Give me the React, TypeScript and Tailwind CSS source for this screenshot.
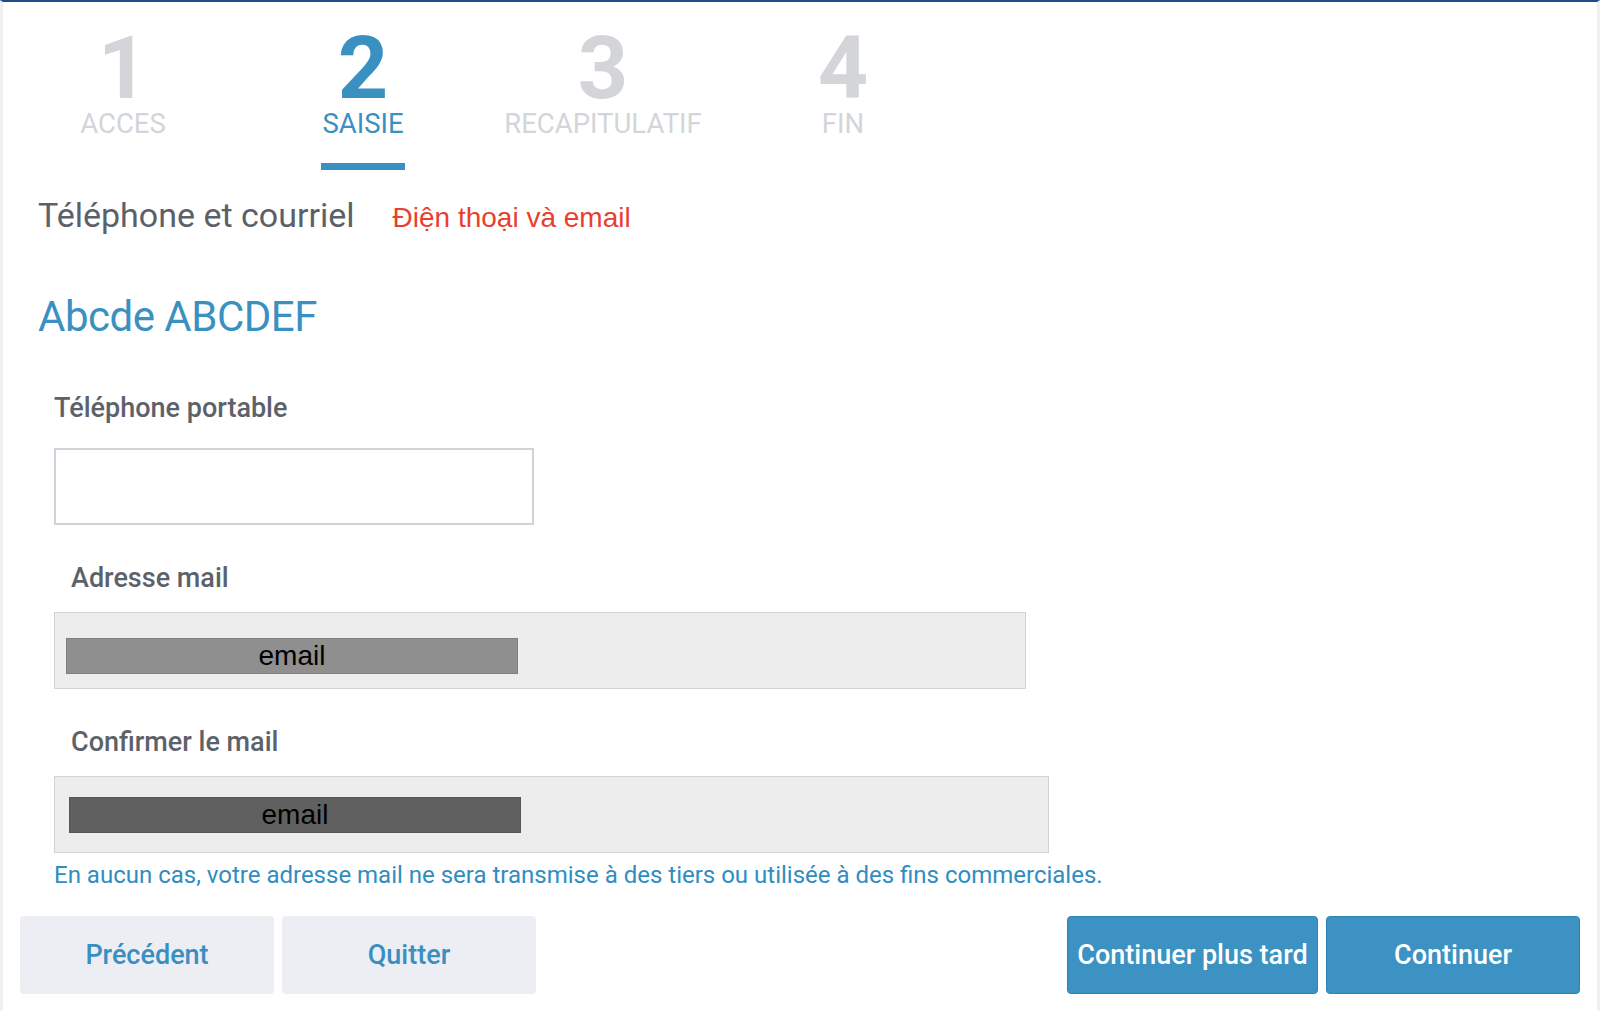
import React from "react";

const steps = [
  { n: "1", label: "ACCES" },
  { n: "2", label: "SAISIE", active: true },
  { n: "3", label: "RECAPITULATIF" },
  { n: "4", label: "FIN" },
];

function Stepper() {
  return (
    <div className="flex pt-[26px]">
      {steps.map((s) => (
        <div key={s.n} className="flex w-[240px] flex-col items-center">
          <span
            className={`text-[88px] font-bold leading-[80px] ${
              s.active ? "text-[#3a91c1]" : "text-[#d3d5d9]"
            }`}
          >
            {s.n}
          </span>
          <span
            className={`mt-[1px] text-[27.5px] leading-[30px] ${
              s.active ? "text-[#3a91c1]" : "text-[#d3d5d9]"
            }`}
          >
            {s.label}
          </span>
          <div
            className={`mt-[24px] h-[7px] w-[84px] ${
              s.active ? "bg-[#3a91c1]" : "bg-transparent"
            }`}
          />
        </div>
      ))}
    </div>
  );
}

function EmailField({
  label,
  width,
  barColor,
  padTop,
  padLeft,
}: {
  label: string;
  width: string;
  barColor: string;
  padTop: string;
  padLeft: string;
}) {
  return (
    <div className="flex flex-col">
      <label className="pl-[17px] text-[27px] font-medium leading-[32px] text-[#5d626a]">
        {label}
      </label>
      <div
        className={`mt-[18px] h-[77px] border border-[#d3d3d3] bg-[#ededed] ${width} ${padTop} ${padLeft}`}
      >
        <div
          className={`flex h-[36px] w-[452px] items-center justify-center border border-black/10 ${barColor} font-['Liberation_Sans',Arial,sans-serif] text-[28px] leading-none text-black`}
        >
          email
        </div>
      </div>
    </div>
  );
}

export default function App() {
  return (
    <div className="min-h-[1011px] border-x-[3px] border-t-2 border-x-[#eef0f2] border-t-[#1d4e89] bg-white font-['Roboto',sans-serif]">
      <Stepper />

      <div className="flex items-baseline gap-[38px] pl-[35px] pt-[25px]">
        <h1 className="text-[34px] leading-[40px] text-[#5c6169]">Téléphone et courriel</h1>
        <span className="font-['Liberation_Sans',Arial,sans-serif] text-[28px] text-[#e8402f]">
          Điện thoại và email
        </span>
      </div>

      <h2 className="pl-[35px] pt-[53px] text-[42px] leading-[50px] tracking-[-0.5px] text-[#3a91c1]">
        Abcde ABCDEF
      </h2>

      <div className="flex flex-col pl-[51px] pt-[50px]">
        <label className="text-[27px] font-medium leading-[32px] text-[#5d626a]">
          Téléphone portable
        </label>
        <input
          type="text"
          className="mt-[24px] h-[77px] w-[480px] border-2 border-[#d0d4da] bg-white px-3 text-[22px] outline-none"
        />

        <div className="mt-[37px]">
          <EmailField
            label="Adresse mail"
            width="w-[972px]"
            barColor="bg-[#8f8f8f]"
            padTop="pt-[25px]"
            padLeft="pl-[11px]"
          />
        </div>
        <div className="mt-[37px]">
          <EmailField
            label="Confirmer le mail"
            width="w-[995px]"
            barColor="bg-[#606060]"
            padTop="pt-[20px]"
            padLeft="pl-[14px]"
          />
        </div>

        <p className="mt-[8px] text-[24px] leading-[28px] text-[#2f8dc1]">
          En aucun cas, votre adresse mail ne sera transmise à des tiers ou utilisée à des fins commerciales.
        </p>
      </div>

      <div className="flex items-center justify-between px-[17px] pt-[27px]">
        <div className="flex gap-[8px]">
          <button className="h-[78px] w-[254px] rounded-[4px] bg-[#edeef3] text-[27px] font-medium text-[#3a8fc0]">
            Précédent
          </button>
          <button className="h-[78px] w-[254px] rounded-[4px] bg-[#edeef3] text-[27px] font-medium text-[#3a8fc0]">
            Quitter
          </button>
        </div>
        <div className="flex gap-[8px]">
          <button className="h-[78px] w-[251px] rounded-[4px] border border-[#2a84b8] bg-[#3c92c2] text-[27px] font-medium text-white">
            Continuer plus tard
          </button>
          <button className="h-[78px] w-[254px] rounded-[4px] border border-[#2a84b8] bg-[#3c92c2] text-[27px] font-medium text-white">
            Continuer
          </button>
        </div>
      </div>
    </div>
  );
}
